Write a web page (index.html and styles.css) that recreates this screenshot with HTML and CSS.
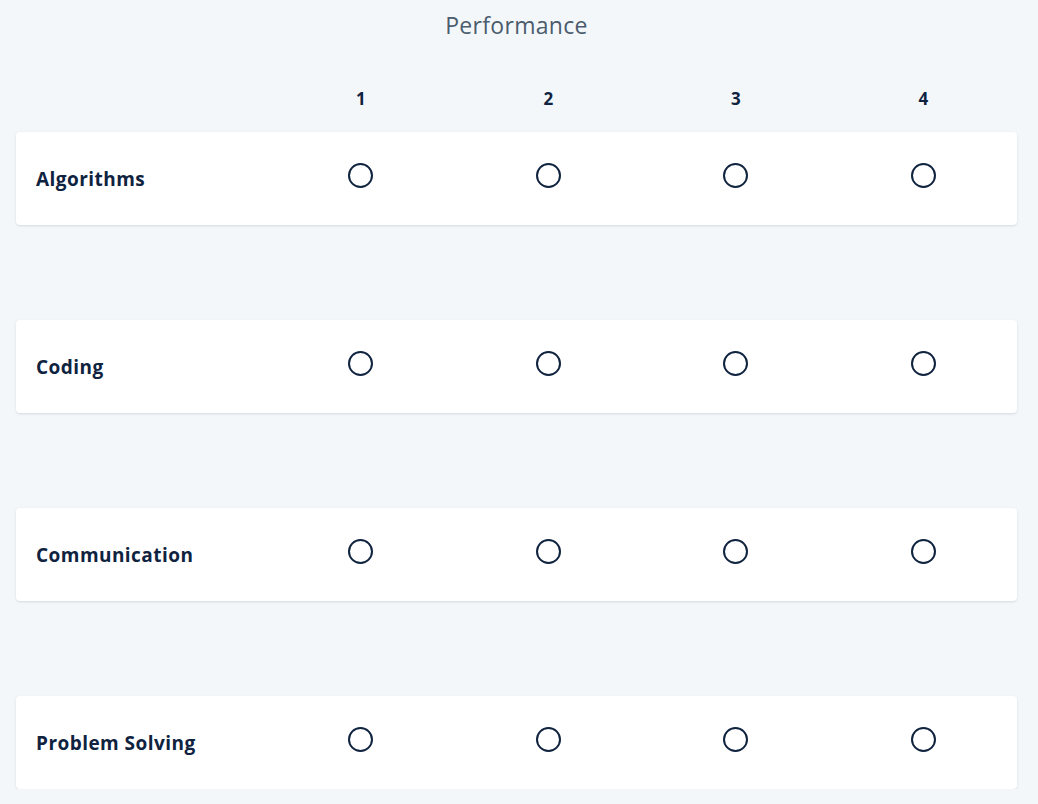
FILE: index.html
```html
<!DOCTYPE html>
<html lang="en">
<head>
<meta charset="utf-8">
<title>Performance</title>
<link rel="stylesheet" href="styles.css">
</head>
<body>
<main class="matrix">
  <h1 class="title">Performance</h1>
  <div class="head-row">
    <span></span>
    <span class="col-num">1</span>
    <span class="col-num">2</span>
    <span class="col-num">3</span>
    <span class="col-num">4</span>
  </div>
  <div class="rows">
    <div class="card">
      <span class="label">Algorithms</span>
      <span class="cell"><span class="radio"></span></span>
      <span class="cell"><span class="radio"></span></span>
      <span class="cell"><span class="radio"></span></span>
      <span class="cell"><span class="radio"></span></span>
    </div>
    <div class="card">
      <span class="label">Coding</span>
      <span class="cell"><span class="radio"></span></span>
      <span class="cell"><span class="radio"></span></span>
      <span class="cell"><span class="radio"></span></span>
      <span class="cell"><span class="radio"></span></span>
    </div>
    <div class="card">
      <span class="label">Communication</span>
      <span class="cell"><span class="radio"></span></span>
      <span class="cell"><span class="radio"></span></span>
      <span class="cell"><span class="radio"></span></span>
      <span class="cell"><span class="radio"></span></span>
    </div>
    <div class="card">
      <span class="label">Problem Solving</span>
      <span class="cell"><span class="radio"></span></span>
      <span class="cell"><span class="radio"></span></span>
      <span class="cell"><span class="radio"></span></span>
      <span class="cell"><span class="radio"></span></span>
    </div>
  </div>
</main>
</body>
</html>
```
FILE: styles.css
```css
* { box-sizing: border-box; }
html, body {
  margin: 0;
  padding: 0;
  background: #f3f7fa;
  font-family: "Open Sans", "Noto Sans", sans-serif;
  color: #0f2340;
}
.matrix {
  width: 1001px;
  margin-left: 16px;
  padding-top: 10px;
}
.title {
  margin: 0;
  font-size: 23px;
  line-height: 30px;
  font-weight: 400;
  color: #4b5c6d;
  text-align: center;
  letter-spacing: 0.3px;
}
.head-row,
.card {
  display: grid;
  grid-template-columns: 251px repeat(4, 1fr);
  align-items: center;
}
.head-row {
  margin-top: 48px;
  height: 22px;
}
.col-num {
  text-align: center;
  font-size: 17px;
  font-weight: 700;
  line-height: 22px;
}
.rows {
  margin-top: 22px;
  display: flex;
  flex-direction: column;
  gap: 94px;
}
.card {
  height: 93px;
  background: #ffffff;
  border-radius: 4px;
  box-shadow: 0 1px 3px rgba(20, 40, 70, 0.10), 0 1px 1px rgba(20, 40, 70, 0.04);
}
.rows .card + .card {
  margin-top: 1px;
}
.label {
  padding-left: 20px;
  font-size: 19px;
  font-weight: 700;
  line-height: 24px;
  letter-spacing: 0.45px;
}
.cell {
  display: flex;
  justify-content: center;
  padding-bottom: 7px;
}
.radio {
  width: 25px;
  height: 25px;
  border: 2px solid #10233f;
  border-radius: 50%;
  background: #fff;
}
```
